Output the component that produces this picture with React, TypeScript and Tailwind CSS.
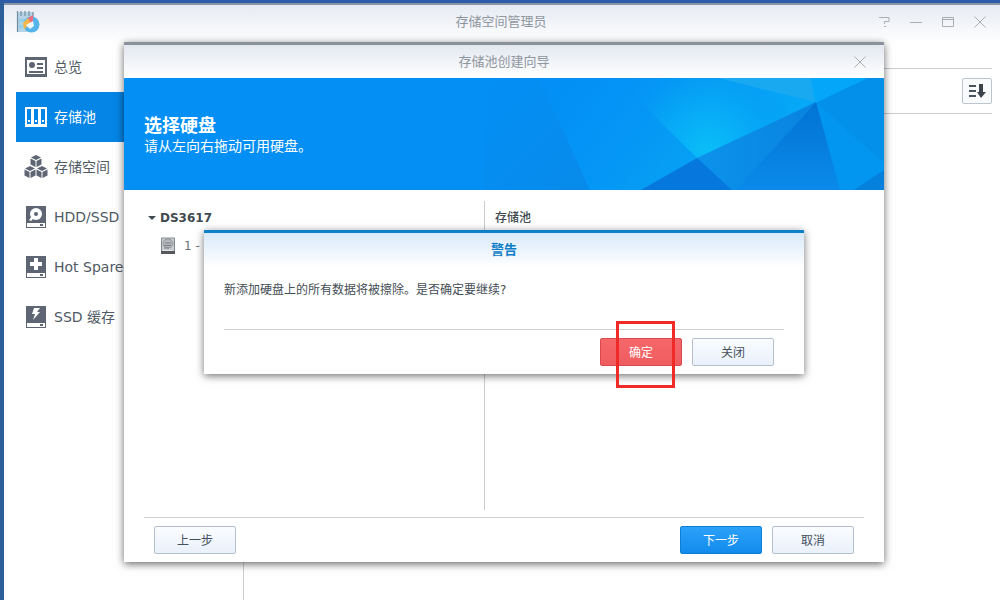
import type { ReactNode } from "react";

function Logo() {
  return (
    <svg width="24" height="24" viewBox="0 0 24 24" aria-hidden="true">
      <path d="M1 2h16v20H1z" fill="#b5d3e4" />
      <path d="M1.500 1v21M5 1v5M9 1v5M13 1v5M17 2v8" stroke="#6f8ea3" strokeWidth="1.200" />
      <path d="M3 9h6v3H3zM3 15h4v3H3z" fill="#8fd0ec" />
      <circle cx="15.500" cy="14.500" r="8" fill="#55b4ea" />
      <path d="M12 8l5-3v7l-4 2z" fill="#ea6b7c" />
      <path d="M7 13l5-5 3 6-7 5z" fill="#f7b944" />
      <path d="M10 15l7-4 1 5-4 3z" fill="#eef8fd" />
    </svg>
  );
}

function OverviewIcon() {
  return (
    <svg width="24" height="24" viewBox="0 0 24 24" fill="currentColor" aria-hidden="true">
      <path fillRule="evenodd" d="M1 2h22v20H1zM3 5v14h18V5z" />
      <circle cx="8" cy="10" r="3" />
      <path d="M13 8h6v2h-6zM13 12h6v2h-6zM5 16h14v2H5z" />
    </svg>
  );
}

function PoolIcon() {
  return (
    <svg width="24" height="24" viewBox="0 0 24 24" fill="currentColor" aria-hidden="true">
      <path fillRule="evenodd" d="M1 2h22v20H1zM3 4v15h4V4zM10 4v15h4V4zM17 4v15h4V4z" />
      <path d="M4 15h2v2H4zM11 15h2v2h-2zM18 15h2v2h-2z" />
    </svg>
  );
}

function Cube({ x, y }: { x: number; y: number }) {
  return (
    <g transform={`translate(${x} ${y})`}>
      <path d="M6 0l5 2.500-5 2.500-5-2.500z" />
      <path d="M.500 3.600l5 2.500v6l-5-2.600z" />
      <path d="M11.500 3.600l-5 2.500v6l5-2.600z" />
    </g>
  );
}

function CubesIcon() {
  return (
    <svg width="24" height="24" viewBox="0 0 24 24" fill="currentColor" aria-hidden="true">
      <Cube x={6} y={0} />
      <Cube x={0} y={11} />
      <Cube x={12} y={11} />
    </svg>
  );
}

function DriveIcon({ children }: { children: ReactNode }) {
  return (
    <svg width="24" height="24" viewBox="0 0 24 24" fill="currentColor" aria-hidden="true">
      <path d="M2 1h20v16H2z" />
      <path fillRule="evenodd" d="M2 17h20v6H2zM3 18v4h18v-4z" />
      <path d="M16 19h3v2h-3z" />
      {children}
    </svg>
  );
}

function SmallDiskIcon() {
  return (
    <svg width="16" height="18" viewBox="0 0 16 18" aria-hidden="true">
      <path d="M1.500 1h13v15h-13z" fill="#c9cdd1" stroke="#85898e" />
      <ellipse cx="8" cy="6.500" rx="5" ry="4.500" fill="#b4b8bd" stroke="#92969b" />
      <path d="M5 6h6M4 8.500h7M4 11h5" stroke="#7d8186" />
      <path d="M1 14h14v3H1z" fill="#55595e" />
      <path d="M3 13.500h9" stroke="#e3e5e7" />
    </svg>
  );
}

function CloseGlyph() {
  return (
    <svg width="12" height="12" viewBox="0 0 12 12" fill="none" stroke="#a9aeb3" aria-hidden="true">
      <path d="M.500.500l11 11M11.500.500l-11 11" />
    </svg>
  );
}

function SortIcon() {
  return (
    <svg width="18" height="16" viewBox="0 0 18 16" aria-hidden="true">
      <path d="M1 3h7M1 8h7M1 13h7" stroke="#4b535c" strokeWidth="2" />
      <path d="M11 1h4v8h3l-5 6-4-6h2z" fill="#3c434b" />
    </svg>
  );
}

function BannerArt() {
  return (
    <svg
      className="absolute inset-y-0 right-0 h-full w-[400px]"
      viewBox="0 0 400 112"
      preserveAspectRatio="none"
      aria-hidden="true"
    >
      <defs>
        <linearGradient id="glow" x1="0" y1="0" x2="1" y2="0.300">
          <stop offset="0" stopColor="#0290f8" stopOpacity="0.200" />
          <stop offset="0.600" stopColor="#069cf4" />
          <stop offset="1" stopColor="#06aaf8" />
        </linearGradient>
        <radialGradient id="bright" gradientUnits="userSpaceOnUse" cx="225" cy="74" r="95">
          <stop offset="0" stopColor="#0abef8" />
          <stop offset="0.500" stopColor="#07a9f6" />
          <stop offset="1" stopColor="#0499f5" stopOpacity="0" />
        </radialGradient>
        <linearGradient id="shade" x1="0" y1="0" x2="1" y2="0">
          <stop offset="0" stopColor="#0c93ec" />
          <stop offset="1" stopColor="#0983de" />
        </linearGradient>
        <linearGradient id="deep" x1="0" y1="0" x2="0" y2="1">
          <stop offset="0" stopColor="#0273d4" />
          <stop offset="1" stopColor="#0a8aea" />
        </linearGradient>
        <linearGradient id="left" x1="0" y1="0" x2="1" y2="1">
          <stop offset="0" stopColor="#048ff5" />
          <stop offset="1" stopColor="#078bea" />
        </linearGradient>
      </defs>
      <path d="M55 0L106 112H0V0z" fill="url(#left)" />
      <path d="M55 0H332V24L157 112H106z" fill="url(#glow)" />
      <path d="M132 0H235L331 24 213 80z" fill="url(#bright)" />
      <path d="M234 0H384L332 25z" fill="#04a6f9" />
      <path d="M234 0H327L331 24z" fill="#18a9f0" />
      <path d="M384 0H400V112H350L332 25z" fill="#0296f0" />
      <path d="M384 0H400V85L332 25z" fill="#0290ea" />
      <path d="M332 24L213 80 248 112H252z" fill="url(#shade)" />
      <path d="M213 80L157 112H248z" fill="#0678dd" />
      <path d="M332 24L252 112H356z" fill="url(#deep)" />
      <path d="M400 92L370 112H400z" fill="#0580dc" />
    </svg>
  );
}

function PlainButton({ children }: { children: ReactNode }) {
  return (
    <button
      type="button"
      className="h-7 w-[82px] rounded-xs border border-[#b4c0cd] bg-linear-to-b from-[#fafcff] to-[#eaf1fb] pt-px text-[#44505c]"
    >
      {children}
    </button>
  );
}

const navItems = [
  { label: "总览", icon: <OverviewIcon /> },
  { label: "存储池", icon: <PoolIcon />, active: true },
  { label: "存储空间", icon: <CubesIcon /> },
  {
    label: "HDD/SSD",
    icon: (
      <DriveIcon>
        <circle cx="12" cy="9" r="6" fill="#fff" />
        <circle cx="12" cy="9" r="2" />
        <path d="M5 15l3-4 2 2-3 3z" fill="#fff" />
      </DriveIcon>
    ),
  },
  {
    label: "Hot Spare",
    icon: (
      <DriveIcon>
        <path d="M10 3h4v4h4v4h-4v4h-4v-4H6V7h4z" fill="#fff" />
      </DriveIcon>
    ),
  },
  {
    label: "SSD 缓存",
    icon: (
      <DriveIcon>
        <path d="M10 3h6l-3 4h3l-7 8 2-6H8z" fill="#fff" />
      </DriveIcon>
    ),
  },
];

function Sidebar() {
  return (
    <nav className="w-60 shrink-0 border-r border-[#c9cdd1] pl-3">
      {navItems.map((item) => (
        <a
          key={item.label}
          href="#"
          className={
            item.active
              ? "flex h-[50px] items-center gap-[6px] bg-[#0585e6] pl-2 text-sm text-white"
              : "flex h-[50px] items-center gap-[6px] pl-2 text-sm text-[#505a65]"
          }
        >
          <span className={item.active ? "text-white" : "text-[#5d6672]"}>{item.icon}</span>
          {item.label}
        </a>
      ))}
    </nav>
  );
}

function WarningDialog() {
  return (
    <section
      role="alertdialog"
      aria-labelledby="warning-title"
      className="absolute inset-x-20 top-[185px] border-t-3 border-[#0c80c8] bg-white px-5 shadow-[0_2px_8px_rgba(0,0,0,0.55)]"
    >
      <header className="-mx-5 flex h-[34px] items-center justify-center bg-linear-to-b from-[#d9e9fa] to-white">
        <h3 id="warning-title" className="text-[13px] font-bold text-[#0c7cc6]">
          警告
        </h3>
      </header>
      <p className="pt-[13px] pb-[29px] text-xs leading-5 text-[#454d55]">
        新添加硬盘上的所有数据将被擦除。是否确定要继续?
      </p>
      <footer className="flex justify-end gap-[10px] border-t border-[#d0d3d6] px-[10px] py-2 text-xs">
        <div className="relative">
          <button
            type="button"
            className="h-7 w-[82px] rounded-xs border border-[#d84a50] bg-linear-to-b from-[#f5686a] to-[#f05c60] pt-px text-white"
          >
            确定
          </button>
          <span className="pointer-events-none absolute -top-[17px] left-4 h-[67px] w-[59px] border-3 border-[#f02a26]" />
        </div>
        <PlainButton>关闭</PlainButton>
      </footer>
    </section>
  );
}

function Wizard() {
  return (
    <section
      role="dialog"
      aria-labelledby="wizard-title"
      className="relative w-full max-w-[760px] border-t-3 border-[#89919b] bg-white shadow-[0_2px_8px_rgba(0,0,0,0.6)]"
    >
      <header className="relative flex h-[33px] items-center justify-center bg-linear-to-b from-[#e3e8f0] to-white">
        <h2 id="wizard-title" className="text-[13px] text-[#8f969e]">
          存储池创建向导
        </h2>
        <button type="button" aria-label="关闭向导" className="absolute right-[18px]">
          <CloseGlyph />
        </button>
      </header>
      <div className="relative h-28 bg-[#048ff5] px-5 pt-9 text-white">
        <BannerArt />
        <h3 className="relative text-lg leading-6 font-bold">选择硬盘</h3>
        <p className="relative text-sm leading-4">请从左向右拖动可用硬盘。</p>
      </div>
      <div className="mt-[11px] flex h-[309px] px-5 text-xs text-[#414950]">
        <div className="w-[341px] border-r border-[#c9cdd1] pt-[7px]">
          <div className="flex items-center gap-1 pl-1 leading-5 font-bold">
            <span className="border-x-4 border-t-4 border-x-transparent border-t-[#414950]" />
            DS3617
          </div>
          <div className="mt-2 flex items-center gap-2 pl-4 leading-5 text-[#6a7178]">
            <SmallDiskIcon />1 -
          </div>
        </div>
        <div className="flex-1 pt-[7px] pl-[10px] leading-5 font-medium">存储池</div>
      </div>
      <footer className="mx-5 mt-[7px] flex gap-[10px] border-t border-[#d0d3d6] px-[10px] py-2 text-xs">
        <PlainButton>上一步</PlainButton>
        <button
          type="button"
          className="ml-auto h-7 w-[82px] rounded-xs border border-[#0d7fd6] bg-linear-to-b from-[#2ba1f9] to-[#108bec] pt-px text-white"
        >
          下一步
        </button>
        <PlainButton>取消</PlainButton>
      </footer>
      <WarningDialog />
    </section>
  );
}

export default function App() {
  return (
    <div className="flex min-h-screen flex-col border-t-3 border-l-4 border-t-[#2f5ca8] border-l-[#2c5f9a] bg-white font-['DejaVu_Sans','Noto_Sans_CJK_SC',sans-serif]">
      <div className="relative flex flex-1 flex-col border-t-2 border-[#8795a5]">
        <header className="flex h-[37px] items-center bg-linear-to-b from-[#e6eaf2] to-white pr-[14px] pb-1 pl-3">
          <div className="flex-1">
            <Logo />
          </div>
          <h1 className="text-[13px] text-[#8f969e]">存储空间管理员</h1>
          <div className="flex flex-1 items-center justify-end gap-5 text-[#a9aeb3]">
            <button type="button" aria-label="帮助">
              <svg width="12" height="12" viewBox="0 0 12 12" fill="none" stroke="currentColor" aria-hidden="true">
                <path d="M1 1.500h10v4H6.500V8M6 10.500h2" />
              </svg>
            </button>
            <button type="button" aria-label="最小化">
              <svg width="12" height="12" viewBox="0 0 12 12" fill="none" stroke="currentColor" aria-hidden="true">
                <path d="M0 6.500h12" />
              </svg>
            </button>
            <button type="button" aria-label="最大化">
              <svg width="12" height="12" viewBox="0 0 12 12" fill="none" stroke="currentColor" aria-hidden="true">
                <path d="M.500 1.500h11v9H.500zM.500 3.500h11" />
              </svg>
            </button>
            <button type="button" aria-label="关闭">
              <CloseGlyph />
            </button>
          </div>
        </header>
        <div className="flex flex-1">
          <Sidebar />
          <main className="flex-1 pt-[26px] pr-2">
            <div className="flex h-[46px] items-center justify-end border-y border-[#c9cdd1]">
              <button
                type="button"
                aria-label="排序"
                className="flex h-[26px] w-[30px] items-center justify-center rounded-xs border border-[#bcc5ce] bg-[#f8fafc]"
              >
                <SortIcon />
              </button>
            </div>
          </main>
        </div>
        <div className="absolute inset-x-0 top-[37px] flex justify-center pl-1">
          <Wizard />
        </div>
      </div>
    </div>
  );
}
